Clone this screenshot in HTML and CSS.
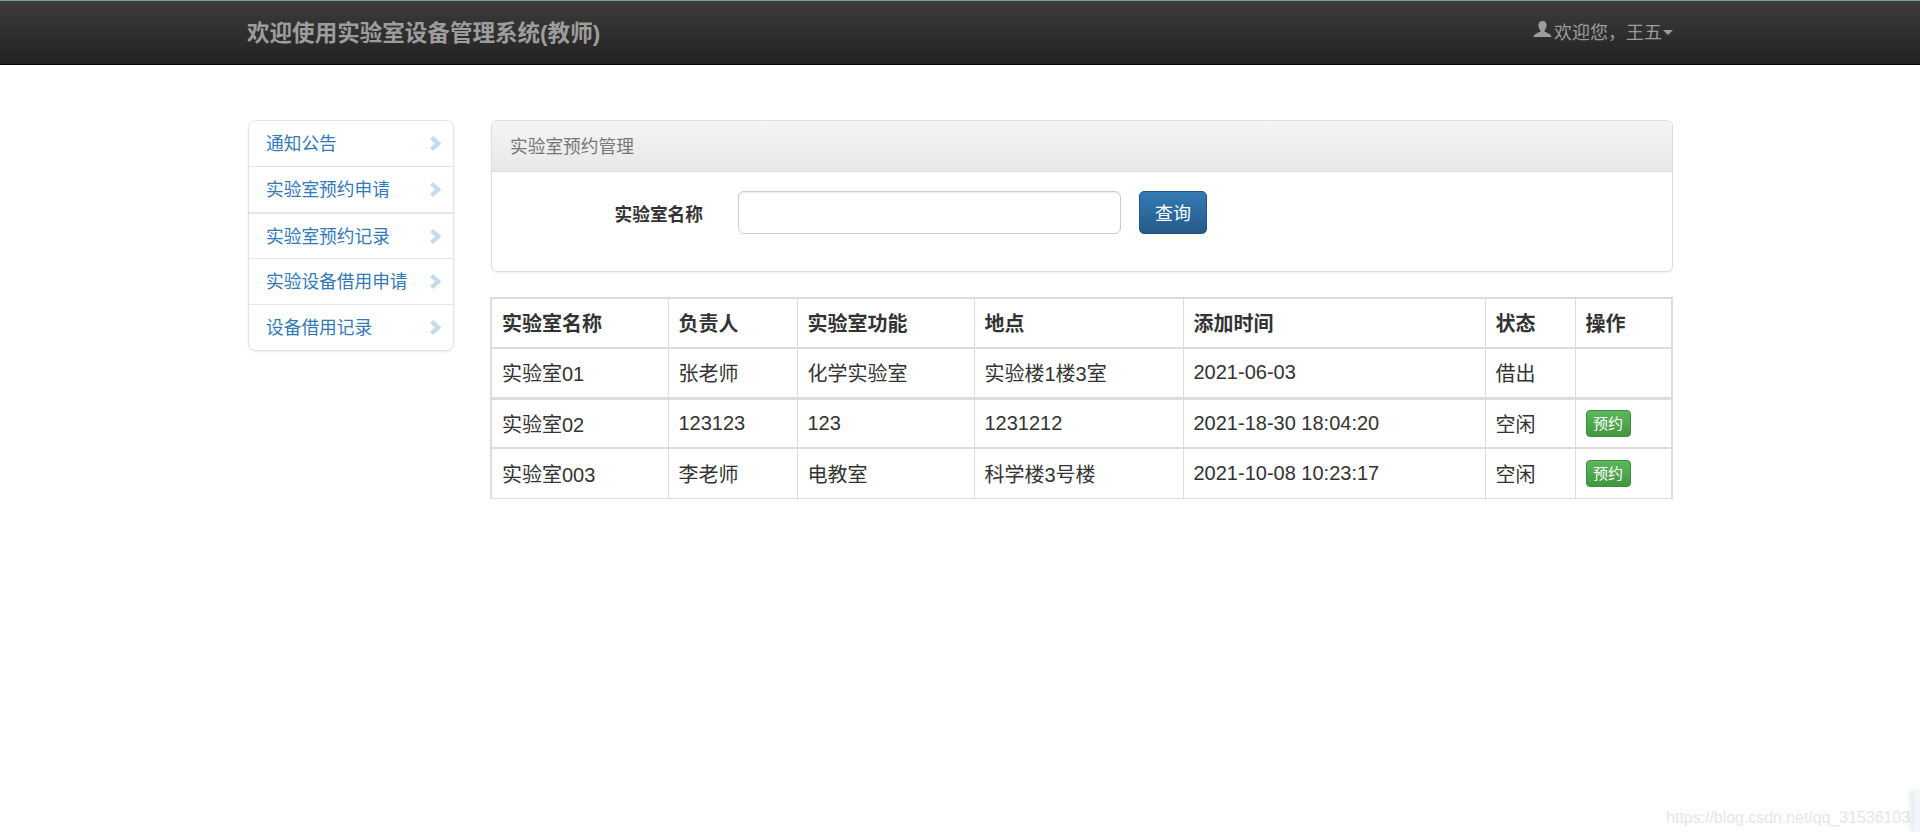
FILE: index.html
```html
<!DOCTYPE html>
<html>
<head>
    <title>实验室设备管理系统</title>
    <link rel="stylesheet" href="styles.css">
</head>
<body>
    <div class="navbar">
        <div class="wrap navbar-inner">
            <a class="brand">欢迎使用实验室设备管理系统(教师)</a>
            <a class="user-menu">
                <svg class="user-icon" viewBox="0 0 20 20"><path d="M10 1c-3 0-4.600 2.200-4.300 5 .2 2 1 3.700 2.100 4.700v1.500c-1 1-6.800 2-7.300 5.800h19c-.5-3.800-6.300-4.800-7.300-5.800v-1.500c1.100-1 1.900-2.700 2.100-4.700.3-2.800-1.300-5-4.300-5z"/></svg>
                欢迎您，王五<span class="caret"></span>
            </a>
        </div>
    </div>

    <div class="wrap main">
        <ul class="side-nav">
            <li><a>通知公告<svg class="chevron" viewBox="0 0 12 15"><path d="M0 3 3 0 11.500 7.500 3 15 0 12 5 7.500z"/></svg></a></li>
            <li class="thick"><a>实验室预约申请<svg class="chevron" viewBox="0 0 12 15"><path d="M0 3 3 0 11.500 7.500 3 15 0 12 5 7.500z"/></svg></a></li>
            <li><a>实验室预约记录<svg class="chevron" viewBox="0 0 12 15"><path d="M0 3 3 0 11.500 7.500 3 15 0 12 5 7.500z"/></svg></a></li>
            <li><a>实验设备借用申请<svg class="chevron" viewBox="0 0 12 15"><path d="M0 3 3 0 11.500 7.500 3 15 0 12 5 7.500z"/></svg></a></li>
            <li><a>设备借用记录<svg class="chevron" viewBox="0 0 12 15"><path d="M0 3 3 0 11.500 7.500 3 15 0 12 5 7.500z"/></svg></a></li>
        </ul>

        <div class="content">
            <div class="panel">
                <div class="panel-heading">实验室预约管理</div>
                <form class="search-form">
                    <label for="lab-name">实验室名称</label>
                    <input type="text" id="lab-name">
                    <button type="button" class="btn-query">查询</button>
                </form>
            </div>

            <table class="lab-table">
                <colgroup>
                    <col class="c1"><col class="c2"><col class="c3"><col class="c4"><col class="c5"><col class="c6"><col class="c7">
                </colgroup>
                <tr class="head-row">
                    <th>实验室名称</th><th>负责人</th><th>实验室功能</th><th>地点</th><th>添加时间</th><th>状态</th><th>操作</th>
                </tr>
                <tr class="row-thick">
                    <td>实验室01</td><td>张老师</td><td>化学实验室</td><td>实验楼1楼3室</td><td>2021-06-03</td><td>借出</td><td></td>
                </tr>
                <tr>
                    <td>实验室02</td><td>123123</td><td>123</td><td>1231212</td><td>2021-18-30 18:04:20</td><td>空闲</td><td><a class="btn-book">预约</a></td>
                </tr>
                <tr>
                    <td>实验室003</td><td>李老师</td><td>电教室</td><td>科学楼3号楼</td><td>2021-10-08 10:23:17</td><td>空闲</td><td><a class="btn-book">预约</a></td>
                </tr>
            </table>
        </div>
    </div>

    <div class="watermark">https://blog.csdn.net/qq_31536103</div>
    <div class="corner-widget"></div>
</body>
</html>
```

FILE: styles.css
```css
* { box-sizing: border-box; }
body { margin: 0; background: #fff; font-family: "Liberation Sans", "Noto Sans CJK SC", sans-serif; font-size: 17.7px; color: #333; overflow: hidden; }
.wrap { width: 1425px; margin-left: 248px; }

.navbar { height: 65px; background: linear-gradient(to bottom, #3c3c3c, #222); border-top: 1px solid #7d9a9c; border-bottom: 1px solid #080808; }
.navbar-inner { display: flex; justify-content: space-between; align-items: center; height: 59px; }
.brand { font-size: 22.55px; font-weight: bold; color: #9d9d9d; margin-left: -1px; }
.user-menu { display: flex; align-items: center; font-size: 18px; color: #9d9d9d; }
.user-icon { width: 19px; height: 19px; fill: #9d9d9d; margin-right: 2px; margin-top: -3px; }
.caret { width: 0; height: 0; margin-left: 1px; margin-top: 4px; border-top: 5px solid #9d9d9d; border-left: 5px solid transparent; border-right: 5px solid transparent; }

.main { display: flex; gap: 37px; padding-top: 55px; align-items: flex-start; }

.side-nav { flex: none; list-style: none; margin: 0; padding: 0; width: 206px; border: 1px solid #e3e3e3; border-radius: 8px; box-shadow: 0 1px 2px rgba(0,0,0,.08); }
.side-nav li { height: 46px; border-top: 1px solid #e5e5e5; }
.side-nav li:first-child { border-top: 0; height: 45px; }
.side-nav li.thick + li { border-top: 2px solid #e5e5e5; }
.side-nav a { display: flex; justify-content: space-between; align-items: center; height: 100%; padding: 0 11px 3px 17px; color: #337ab7; }
.chevron { width: 12px; height: 15px; margin-top: 3px; fill: #c6dbee; }

.content { flex: none; width: 1182px; }
.panel { height: 152px; border: 1px solid #ddd; border-radius: 6px; box-shadow: 0 1px 2px rgba(0,0,0,.06); }
.panel-heading { height: 51px; padding: 11px 18px 0; color: #777; background: linear-gradient(to bottom, #f5f5f5, #e8e8e8); border-bottom: 1px solid #ddd; border-radius: 5px 5px 0 0; }
.search-form { display: flex; align-items: center; padding-top: 19px; }
.search-form label { width: 246px; padding-right: 35px; text-align: right; font-weight: bold; }
.search-form input { width: 383px; height: 43px; border: 1px solid #ccc; border-radius: 6px; box-shadow: inset 0 1px 1px rgba(0,0,0,.075); }
.btn-query { width: 68px; height: 43px; margin-left: 18px; padding: 0 0 2px; font: inherit; font-size: 18px; color: #fff; background: linear-gradient(to bottom, #337ab7, #265a88); border: 1px solid #245580; border-radius: 5px; }

.lab-table { width: 1181px; margin: 25px 0 0 -1px; border-collapse: collapse; table-layout: fixed; font-size: 20px; border: 2px solid #ddd; border-bottom-width: 1px; }
.c1 { width: 177px; }
.c2 { width: 129px; }
.c3 { width: 177px; }
.c4 { width: 209px; }
.c5 { width: 302px; }
.c6 { width: 90px; }
.c7 { width: 97px; }
.lab-table th, .lab-table td { height: 50px; padding: 0 10px; text-align: left; border: 1px solid #ddd; border-top-width: 1px; }
.lab-table th { font-weight: bold; padding-bottom: 2px; border-bottom-width: 2px; }
.lab-table tr + tr td { border-bottom-width: 2px; }
.lab-table .row-thick td { padding-bottom: 1px; border-bottom-width: 3px; }
.lab-table tr:last-child td { border-bottom-width: 1px; }
.btn-book { display: inline-block; width: 45px; height: 27px; line-height: 25px; text-align: center; font-size: 15px; color: #fff; background: linear-gradient(to bottom, #5cb85c, #419641); border: 1px solid #3e8f3e; border-radius: 4px; vertical-align: middle; }

.watermark { position: absolute; right: 10px; bottom: 5px; font-size: 15.9px; color: #e6e6e6; }
.corner-widget { position: absolute; right: 0; top: 790px; width: 6px; height: 42px; background: #f0f6fc; box-shadow: -3px 0 6px rgba(0,0,0,.12); }
```
